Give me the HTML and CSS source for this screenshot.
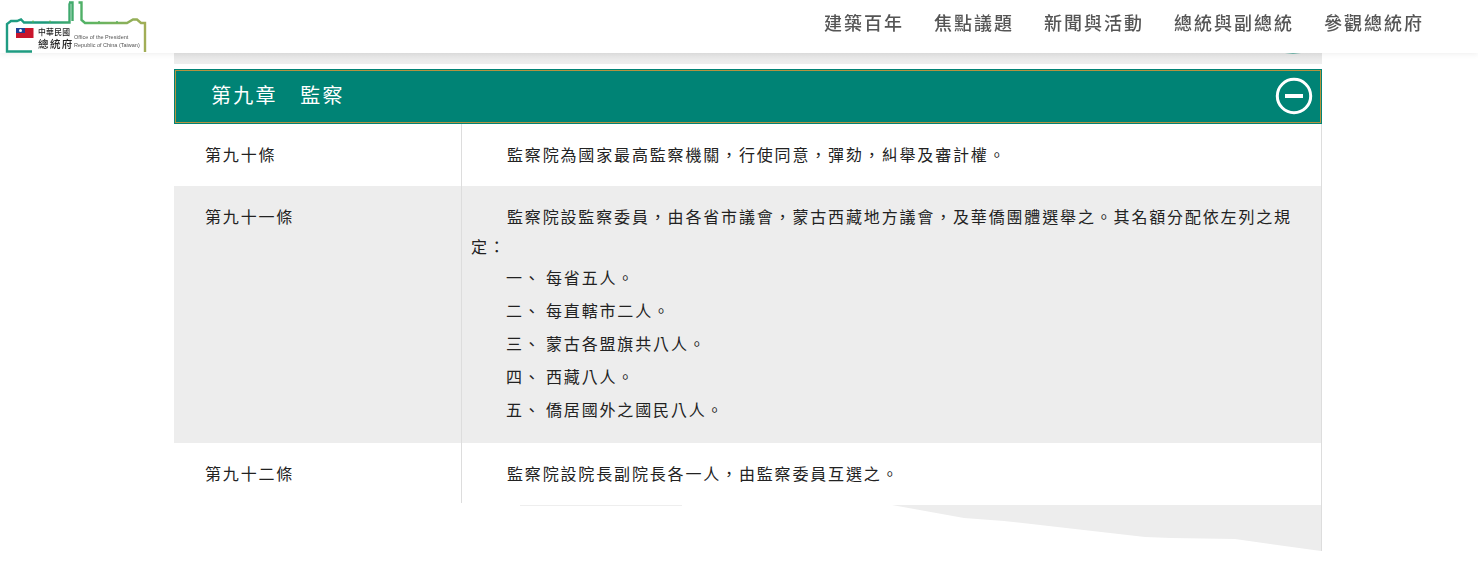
FILE: index.html
```html
<!DOCTYPE html>
<html lang="zh-Hant">
<head>
<meta charset="utf-8">
<title>第九章 監察</title>
<link rel="stylesheet" href="styles.css">
</head>
<body>
<header class="site-header">
  <a class="logo" href="#">
    <svg class="logo-svg" width="150" height="53" viewBox="0 0 150 53">
      <defs>
        <linearGradient id="logoGrad" x1="0" y1="0" x2="150" y2="0" gradientUnits="userSpaceOnUse">
          <stop offset="0" stop-color="#1f9c84"/>
          <stop offset="0.3" stop-color="#1d9a7c"/>
          <stop offset="0.6" stop-color="#5cb562"/>
          <stop offset="1" stop-color="#a8ad55"/>
        </linearGradient>
      </defs>
      <path class="logo-line" d="M32 51.500H7V24L11 21H17L21 19.500L24 22.500H69.500V4H68.500"/>
      <path class="logo-line" d="M69 2.500H72.500V21"/>
      <path class="logo-line" d="M78.500 2.500H81.500V20L85 23H127L133 19.500H137L141 23H145V52"/>
      <circle class="logo-dot" cx="33" cy="21.500" r="1"/>
      <circle class="logo-dot" cx="50" cy="21.500" r="1"/>
      <circle class="logo-dot" cx="99" cy="22" r="1"/>
      <circle class="logo-dot" cx="117" cy="22" r="1"/>
      <rect x="16" y="28" width="17.500" height="10" fill="#c9152c"/>
      <rect x="16" y="28" width="9" height="5" fill="#1f3f95"/>
      <circle cx="20.500" cy="30.500" r="1.500" fill="#fff"/>
      <text class="logo-zh-small" x="38" y="35">中華民國</text>
      <text class="logo-zh-large" x="38" y="47.500">總統府</text>
      <text class="logo-en" x="74" y="39">Office of the President</text>
      <text class="logo-en" x="74" y="47">Republic of China (Taiwan)</text>
    </svg>
  </a>
  <nav class="main-nav">
    <a href="#">建築百年</a>
    <a href="#">焦點議題</a>
    <a href="#">新聞與活動</a>
    <a href="#">總統與副總統</a>
    <a href="#">參觀總統府</a>
  </nav>
</header>

<main class="content">
  <div class="prev-strip"><span class="prev-icon-edge"></span></div>

  <section class="chapter">
    <div class="chapter-head">
      <h2 class="chapter-title">第九章　監察</h2>
      <svg class="toggle-icon" width="38" height="38" viewBox="0 0 38 38">
        <circle cx="19" cy="19" r="16.700" fill="none" stroke="#fff" stroke-width="3"/>
        <rect x="10" y="17" width="18" height="4" fill="#fff"/>
      </svg>
    </div>

    <div class="article">
      <div class="article-no">第九十條</div>
      <div class="article-body">
        <p class="para">監察院為國家最高監察機關，行使同意，彈劾，糾舉及審計權。</p>
      </div>
    </div>

    <div class="article article-alt">
      <div class="article-no">第九十一條</div>
      <div class="article-body">
        <p class="para">監察院設監察委員，由各省市議會，蒙古西藏地方議會，及華僑團體選舉之。其名額分配依左列之規定：</p>
        <ul class="items">
          <li class="item"><span class="item-no">一、</span><span>每省五人。</span></li>
          <li class="item"><span class="item-no">二、</span><span>每直轄市二人。</span></li>
          <li class="item"><span class="item-no">三、</span><span>蒙古各盟旗共八人。</span></li>
          <li class="item"><span class="item-no">四、</span><span>西藏八人。</span></li>
          <li class="item"><span class="item-no">五、</span><span>僑居國外之國民八人。</span></li>
        </ul>
      </div>
    </div>

    <div class="article article-last">
      <div class="article-no">第九十二條</div>
      <div class="article-body">
        <p class="para">監察院設院長副院長各一人，由監察委員互選之。</p>
      </div>
    </div>

    <div class="tail"><div class="tail-shape"></div></div>
  </section>
</main>
</body>
</html>
```

FILE: styles.css
```css
* {
  box-sizing: border-box;
}

html,
body {
  margin: 0;
  padding: 0;
  background: #fff;
}

body {
  font-family: "Noto Sans CJK TC", "Noto Sans", sans-serif;
  color: #222;
  overflow: hidden;
}

a {
  color: inherit;
  text-decoration: none;
}

.site-header {
  position: fixed;
  top: 0;
  left: 0;
  right: 0;
  z-index: 10;
  height: 53px;
  display: flex;
  align-items: flex-start;
  justify-content: space-between;
  background: #fff;
  box-shadow: 0 1px 6px rgba(0, 0, 0, 0.07);
}

.logo {
  display: block;
  height: 53px;
}

.logo-svg {
  display: block;
  filter: blur(0.3px);
}

.logo-line {
  fill: none;
  stroke: url(#logoGrad);
  stroke-width: 2.4;
}

.logo-dot {
  fill: #5cb562;
}

.logo-zh-small {
  font-size: 7.800px;
  font-weight: 500;
  letter-spacing: 0.3px;
  fill: #222;
}

.logo-zh-large {
  font-size: 10.500px;
  font-weight: 500;
  letter-spacing: 1.400px;
  fill: #222;
}

.logo-en {
  font-family: "Liberation Sans", sans-serif;
  font-size: 5.500px;
  fill: #555;
}

.main-nav {
  display: flex;
  gap: 30px;
  padding: 9px 54px 0 0;
  font-size: 18px;
  line-height: 26px;
  font-weight: 500;
  letter-spacing: 2px;
  color: #555;
}

.content {
  width: 1148px;
  margin-left: 174px;
}

.prev-strip {
  height: 64px;
  padding-top: 53px;
  display: flex;
  justify-content: flex-end;
  align-items: flex-start;
  background: linear-gradient(#e4e4e4 53px, #eeeeee 64px);
}

.prev-icon-edge {
  width: 16px;
  height: 1px;
  margin-right: 21px;
  background: linear-gradient(90deg, transparent, #6fb5a9, transparent);
}

.chapter {
  margin-top: 5px;
}

.chapter-head {
  height: 55px;
  display: flex;
  align-items: center;
  justify-content: space-between;
  padding: 0 8px 2px 36px;
  background: #008375;
  border: 1px solid #008375;
  box-shadow: inset 0 0 0 1px #b5923f;
}

.chapter-title {
  margin: 0;
  padding-bottom: 2px;
  font-size: 20px;
  line-height: 30px;
  font-weight: 400;
  letter-spacing: 2.300px;
  color: #fff;
}

.toggle-icon {
  display: block;
  flex: none;
}

.article {
  display: grid;
  grid-template-columns: 287px 1fr;
  border-right: 1px solid #ddd;
  font-size: 16px;
  line-height: 30px;
  letter-spacing: 1.840px;
  color: #222;
}

.article-alt {
  background: #ededed;
}

.article-no {
  padding: 15px 0 17px 31px;
}

.article-body {
  padding: 15px 14px 17px 9px;
  border-left: 1px solid #ddd;
}

.article-last .article-no,
.article-last .article-body {
  padding-bottom: 15px;
}

.para {
  margin: 0;
  text-indent: 36px;
}

.items {
  list-style: none;
  margin: 0;
  padding: 0 0 0 35px;
}

.item {
  display: flex;
  line-height: 33px;
}

.item-no {
  width: 40px;
  flex: none;
}

.tail {
  height: 48px;
  padding-top: 2px;
  border-right: 1px solid #ddd;
  background: linear-gradient(#eee, #eee) 346px 2px / 162px 1px no-repeat;
}

.tail-shape {
  height: 46px;
  background: #ededed;
  clip-path: polygon(718px 0, 790px 13px, 830px 16px, 971px 32px, 997px 33px, 1061px 34px, 1147px 46px, 1147px 0);
}
```
